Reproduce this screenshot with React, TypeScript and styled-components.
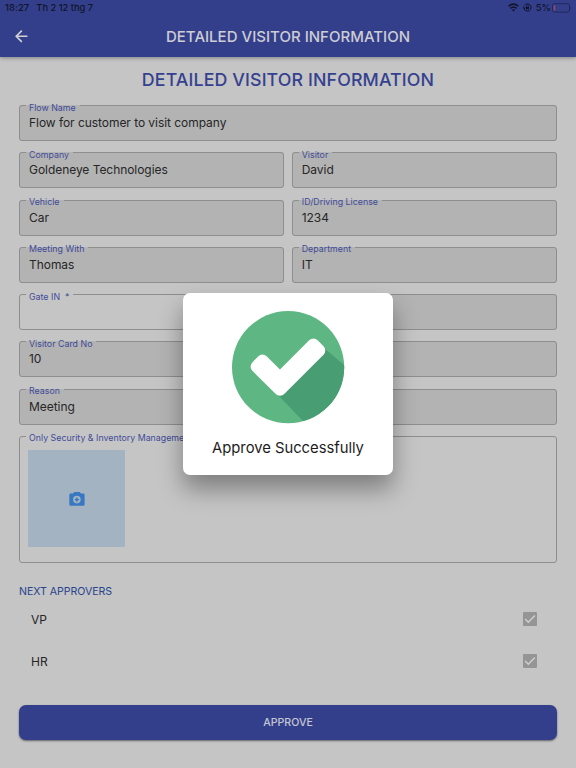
import React from "react";
import styled, { createGlobalStyle } from "styled-components";
import { MdArrowBack } from "react-icons/md";

const GlobalStyle = createGlobalStyle`
  * { box-sizing: border-box; }
  body { margin: 0; background: #c5c5c5; font-family: Inter, "Liberation Sans", sans-serif; }
`;

const Screen = styled.div`
  position: relative;
  width: 576px;
  height: 768px;
  overflow: hidden;
  background: #c5c5c5;
  color: #262626;
`;

const TopBar = styled.header`
  height: 57px;
  background: #343f8c;
  box-shadow: 0 1px 4px rgba(0, 0, 0, 0.35);
`;

const StatusBar = styled.div`
  display: flex;
  align-items: center;
  height: 15px;
  padding: 0 4px 0 5px;
  font-size: 9.5px;
  font-weight: 500;
  color: #10142b;
`;

const StatusTime = styled.span`
  letter-spacing: 0.05px;
`;

const StatusDate = styled.span`
  margin-left: 7px;
  flex: 1;
  font-size: 9.3px;
`;

const StatusIcons = styled.div`
  display: flex;
  align-items: center;
  gap: 4px;
`;

const BatteryLevel = styled.div`
  display: flex;
  align-items: center;
  gap: 1px;
`;

const NavRow = styled.div`
  display: grid;
  grid-template-columns: 43px 1fr 43px;
  align-items: center;
  height: 43px;
`;

const BackButton = styled.button`
  display: flex;
  justify-content: center;
  padding: 0;
  border: 0;
  background: none;
  color: #d2d2d6;
`;

const NavTitle = styled.h1`
  margin: 0;
  text-align: center;
  font-size: 15px;
  font-weight: 500;
  letter-spacing: 0.01px;
  white-space: nowrap;
  color: #cdcdd2;
`;

const Main = styled.main`
  padding: 0 19px;
`;

const Heading = styled.h2`
  margin: 0;
  height: 48px;
  line-height: 46px;
  text-align: center;
  font-size: 17.8px;
  font-weight: 500;
  letter-spacing: 0.12px;
  white-space: nowrap;
  color: #35418f;
`;

const FieldGrid = styled.div`
  display: grid;
  grid-template-columns: 1fr 1fr;
  grid-template-rows: repeat(7, 36px) 127.5px;
  gap: 11.25px 7.5px;
`;

const FieldBox = styled.fieldset<{ $wide?: boolean; $open?: boolean }>`
  grid-column: ${(p) => (p.$wide ? "1 / -1" : "auto")};
  min-width: 0;
  margin: 0;
  padding: 0 9px;
  border: 1px solid #8e8e8e;
  border-radius: 3px;
  background: ${(p) => (p.$open ? "transparent" : "#b3b3b3")};
`;

const Legend = styled.legend`
  display: flex;
  align-items: center;
  height: 1px;
  margin-left: -3px;
  padding: 0 4px 0 3px;
`;

const LegendText = styled.span`
  transform: translateY(2px);
  font-size: 8.8px;
  line-height: 12px;
  letter-spacing: 0.02px;
  white-space: pre;
  color: #414b99;
`;

const Value = styled.div`
  line-height: 33px;
  font-size: 12px;
  letter-spacing: -0.05px;
  white-space: nowrap;
`;

const PhotoTile = styled.button`
  display: flex;
  align-items: center;
  justify-content: center;
  width: 97px;
  height: 97px;
  margin: 13.5px 0 0 -1px;
  padding: 0;
  border: 0;
  background: #a4b3c2;
`;

const SectionTitle = styled.h3`
  margin: 22px 0 0;
  line-height: 14px;
  font-size: 10.6px;
  font-weight: 400;
  letter-spacing: -0.04px;
  color: #28448c;
`;

const ApproverList = styled.ul`
  margin: -1px 0 23px;
  padding: 0;
  list-style: none;
`;

const Approver = styled.li`
  display: flex;
  align-items: center;
  justify-content: space-between;
  height: 42px;
  padding: 0 20px 0 12px;
  font-size: 12px;
`;

const Checkbox = styled.span`
  display: flex;
  align-items: center;
  justify-content: center;
  width: 14px;
  height: 14px;
  border-radius: 1px;
  background: #959595;
  color: #d0d0d0;
`;

const ApproveButton = styled.button`
  display: block;
  width: 100%;
  height: 35px;
  padding: 0;
  border: 0;
  border-radius: 7px;
  background: #343f8c;
  box-shadow: 0 1px 2px rgba(0, 0, 0, 0.5);
  font-family: inherit;
  font-size: 10.6px;
  font-weight: 500;
  color: #c4c6d2;
`;

const Dialog = styled.div`
  position: absolute;
  left: 183px;
  top: 293px;
  display: flex;
  flex-direction: column;
  align-items: center;
  width: 210px;
  height: 182px;
  padding-top: 18px;
  border-radius: 7px;
  background: #fff;
  box-shadow: 0 14px 24px rgba(0, 0, 0, 0.36);
`;

const DialogText = styled.p`
  margin: 14px 0 0;
  line-height: 20px;
  font-size: 14.8px;
  letter-spacing: -0.02px;
  white-space: nowrap;
  color: #1c1c1c;
`;

type FieldProps = { label: string; value?: string; wide?: boolean; open?: boolean; children?: React.ReactNode };

const Field = ({ label, value, wide, open, children }: FieldProps) => (
  <FieldBox $wide={wide} $open={open}>
    <Legend>
      <LegendText>{label}</LegendText>
    </Legend>
    {children ?? <Value>{value}</Value>}
  </FieldBox>
);

const WifiIcon = () => (
  <svg width="11" height="9" viewBox="0 0 11 9" fill="none" stroke="currentColor" strokeWidth="1.5">
    <path d="M.6 3.3Q5.5-1 10.4 3.3M2.4 5.4Q5.5 2.7 8.6 5.4" />
    <path d="M5.5 8.5 3.8 6.8Q5.5 5.5 7.2 6.8z" fill="currentColor" stroke="none" />
  </svg>
);

const LockIcon = () => (
  <svg width="9" height="9" viewBox="0 0 9 9" fill="none" stroke="currentColor">
    <path d="M1 5.7A3.6 3.6 0 1 0 1.5 2.4M.4 3.5 1 5.7l1.8-1.2" strokeWidth="1" />
    <path d="M3.5 4.2v-.7a1 1 0 0 1 2 0v.7" strokeWidth=".8" />
    <rect x="3" y="4" width="3" height="2.3" fill="currentColor" stroke="none" />
  </svg>
);

const BatteryIcon = () => (
  <svg width="20" height="10" viewBox="0 0 20 10">
    <rect x=".5" y=".7" width="17" height="8.4" rx="2.2" fill="none" stroke="#20285a" />
    <rect x="1.7" y="2.2" width="1.4" height="5.4" rx=".6" fill="#a44a64" />
    <path d="M18.7 3.4q1.3 1.5 0 3z" fill="#20285a" />
  </svg>
);

const TickIcon = () => (
  <svg width="14" height="14" viewBox="0 0 14 14" fill="none" stroke="currentColor" strokeWidth="1.4">
    <path d="M2.2 7.1 5.3 10.2 11.9 3.6" />
  </svg>
);

const CameraPlusIcon = () => (
  <svg width="16" height="14" viewBox="0 0 16 14">
    <path d="M5.2 0h5.4L12 1.6h2.2Q15.6 1.6 15.6 3v9.4q0 1.4-1.4 1.4H1.7Q.3 13.8.3 12.4V3q0-1.4 1.4-1.4h2.1z" fill="#3877c1" />
    <circle cx="7.9" cy="7.6" r="3.8" fill="#a4b3c2" />
    <path d="M7.9 4.8 8.8 6.7l1.9.9-1.9.9-.9 1.9-.9-1.9-1.9-.9 1.9-.9z" fill="#3877c1" />
  </svg>
);

const SuccessIcon = () => (
  <svg width="113" height="113" viewBox="0 0 113 113">
    <defs>
      <clipPath id="disc">
        <circle cx="56.1" cy="56.2" r="56.1" />
      </clipPath>
    </defs>
    <g clipPath="url(#disc)">
      <rect width="113" height="113" fill="#5eb682" />
      <path d="M92 37 L142 79 L98 138 L45 83Z" fill="#489d72" />
    </g>
    <path
      d="M48 67 81.4 33.6 87.3 39.5 48 78.8 24.6 55.6 30.4 49.6Z"
      fill="#fff"
      stroke="#fff"
      strokeWidth="12"
      strokeLinejoin="round"
    />
  </svg>
);

export default function App() {
  return (
    <Screen>
      <GlobalStyle />
      <TopBar>
        <StatusBar>
          <StatusTime>18:27</StatusTime>
          <StatusDate>Th 2 12 thg 7</StatusDate>
          <StatusIcons>
            <WifiIcon />
            <LockIcon />
            <BatteryLevel>
              5%
              <BatteryIcon />
            </BatteryLevel>
          </StatusIcons>
        </StatusBar>
        <NavRow>
          <BackButton aria-label="Back">
            <MdArrowBack size={18.5} />
          </BackButton>
          <NavTitle>DETAILED VISITOR INFORMATION</NavTitle>
        </NavRow>
      </TopBar>
      <Main>
        <Heading>DETAILED VISITOR INFORMATION</Heading>
        <FieldGrid>
          <Field wide label="Flow Name" value="Flow for customer to visit company" />
          <Field label="Company" value="Goldeneye Technologies" />
          <Field label="Visitor" value="David" />
          <Field label="Vehicle" value="Car" />
          <Field label="ID/Driving License" value="1234" />
          <Field label="Meeting With" value="Thomas" />
          <Field label="Department" value="IT" />
          <Field open label="Gate IN  *" />
          <Field label="Gate OUT *" />
          <Field wide label="Visitor Card No" value="10" />
          <Field wide label="Reason" value="Meeting" />
          <Field wide open label="Only Security & Inventory Management">
            <PhotoTile aria-label="Add photo">
              <CameraPlusIcon />
            </PhotoTile>
          </Field>
        </FieldGrid>
        <SectionTitle>NEXT APPROVERS</SectionTitle>
        <ApproverList>
          {["VP", "HR"].map((name) => (
            <Approver key={name}>
              {name}
              <Checkbox>
                <TickIcon />
              </Checkbox>
            </Approver>
          ))}
        </ApproverList>
        <ApproveButton>APPROVE</ApproveButton>
      </Main>
      <Dialog role="dialog">
        <SuccessIcon />
        <DialogText>Approve Successfully</DialogText>
      </Dialog>
    </Screen>
  );
}
